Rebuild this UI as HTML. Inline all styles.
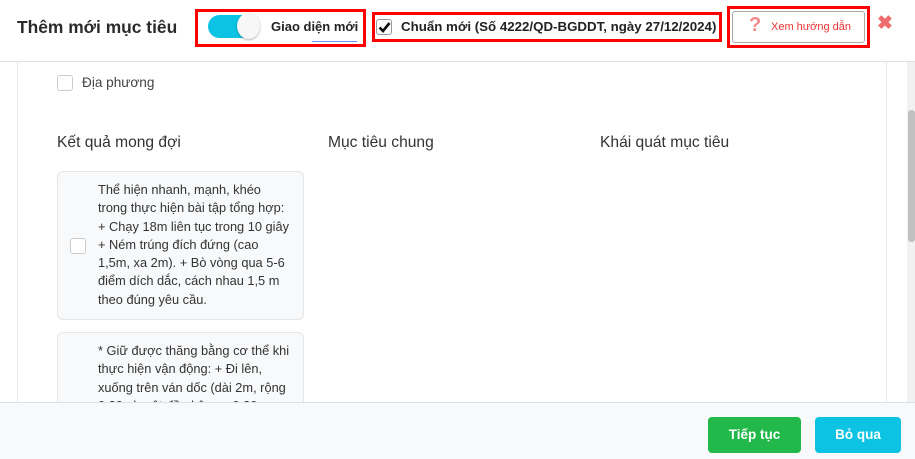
<!DOCTYPE html>
<html><head><meta charset="utf-8"><style>
*{box-sizing:border-box;margin:0;padding:0}
body{width:915px;height:459px;overflow:hidden;background:#fff;font-family:"Liberation Sans",sans-serif;position:relative;color:#333}
.hdr{position:absolute;left:0;top:0;width:915px;height:62px;border-bottom:1px solid #dee2e6;background:#fff}
.title{position:absolute;left:17px;top:17px;font-size:17.4px;font-weight:bold;color:#2b2b2b}
.red{position:absolute;border:3px solid #f00}
.tog{position:absolute;left:208px;top:15px;width:51px;height:23px;border-radius:12px;background:#0dc3e3}
.knob{position:absolute;left:237px;top:13px;width:23px;height:26px;border-radius:50%;background:#f7f7f7;box-shadow:0 1px 2px rgba(0,0,0,.3)}
.lbl{position:absolute;font-size:13px;font-weight:bold;color:#222;white-space:nowrap}
.cb{position:absolute;width:16px;height:16px;border:1px solid #ccc;border-radius:3px;background:#fff}
.btn{position:absolute;border:1px solid #aaa;border-radius:3px;background:#fff;color:#e33;font-size:11px}
.col{position:absolute;top:134px;font-size:15.6px;color:#333}
.card{position:absolute;left:57px;width:247px;border:1px solid #e6e6e6;border-radius:6px;background:#f8f9fa}
.card p{position:absolute;left:40px;top:9px;font-size:12.8px;line-height:18.3px;color:#333;white-space:nowrap}
.foot{position:absolute;left:0;top:402px;width:915px;height:57px;background:#f8f9fa;border-top:1px solid #dee2e6}
.fb{position:absolute;top:417px;height:36px;border-radius:4px;color:#fff;font-weight:bold;font-size:13.5px;text-align:center;line-height:36px}
</style></head><body>
<div style="position:absolute;left:17px;top:62px;width:1px;height:340px;background:#e6e6e6"></div>
<div style="position:absolute;left:886px;top:62px;width:1px;height:340px;background:#e6e6e6"></div>
<div style="position:absolute;left:907px;top:62px;width:8px;height:340px;background:#f1f1f1"></div>
<div style="position:absolute;left:908px;top:110px;width:7px;height:132px;background:#c1c1c1;border-radius:3px"></div>
<div class="cb" style="left:57px;top:75px"></div>
<div style="position:absolute;left:82px;top:75px;font-size:13.6px;color:#444">Địa phương</div>
<div class="col" style="left:57px">Kết quả mong đợi</div>
<div class="col" style="left:328px">Mục tiêu chung</div>
<div class="col" style="left:600px">Khái quát mục tiêu</div>
<div class="card" style="top:171px;height:149px"><div class="cb" style="left:12px;top:66px"></div><p>Thể hiện nhanh, mạnh, khéo<br>trong thực hiện bài tập tổng hợp:<br>+ Chạy 18m liên tục trong 10 giây<br>+ Ném trúng đích đứng (cao<br>1,5m, xa 2m). + Bò vòng qua 5-6<br>điểm dích dắc, cách nhau 1,5 m<br>theo đúng yêu cầu.</p></div>
<div class="card" style="top:332px;height:120px;overflow:hidden"><p>* Giữ được thăng bằng cơ thể khi<br>thực hiện vận động: + Đi lên,<br>xuống trên ván dốc (dài 2m, rộng<br>0,30m) một đầu kê cao 0,30m</p></div>
<div class="hdr">
<div class="title">Thêm mới mục tiêu</div>
<div class="red" style="left:195px;top:9px;width:171px;height:38px"></div>
<div class="tog"></div><div class="knob"></div>
<div class="lbl" style="left:271px;top:19px">Giao diện mới</div>
<div style="position:absolute;left:312px;top:41px;width:45px;height:1px;background:#6a8ff0"></div>
<div class="red" style="left:372px;top:12px;width:350px;height:30px"></div>
<div class="cb" style="left:376px;top:19px;border-color:#999"></div>
<svg style="position:absolute;left:378px;top:21px" width="13" height="12" viewBox="0 0 13 12"><path d="M1.5 6.5 L5 10 L11.5 2" stroke="#111" stroke-width="2.6" fill="none"/></svg>
<div class="lbl" style="left:401px;top:19px;font-size:13.3px">Chuẩn mới (Số 4222/QD-BGDDT, ngày 27/12/2024)</div>
<div class="red" style="left:727px;top:6px;width:143px;height:42px"></div>
<div class="btn" style="left:732px;top:11px;width:133px;height:32px;line-height:30px;padding-left:38px">Xem hướng dẫn</div>
<div style="position:absolute;left:749px;top:14px;font-size:20px;font-weight:bold;color:#f08b8b">?</div>
<div style="position:absolute;left:877px;top:12px;font-size:19px;font-weight:bold;color:#f06b6b">✖</div>
</div>
<div class="foot"></div>
<div class="fb" style="left:708px;width:93px;background:#22b94a">Tiếp tục</div>
<div class="fb" style="left:815px;width:86px;background:#0dc3e3">Bỏ qua</div>
</body></html>
